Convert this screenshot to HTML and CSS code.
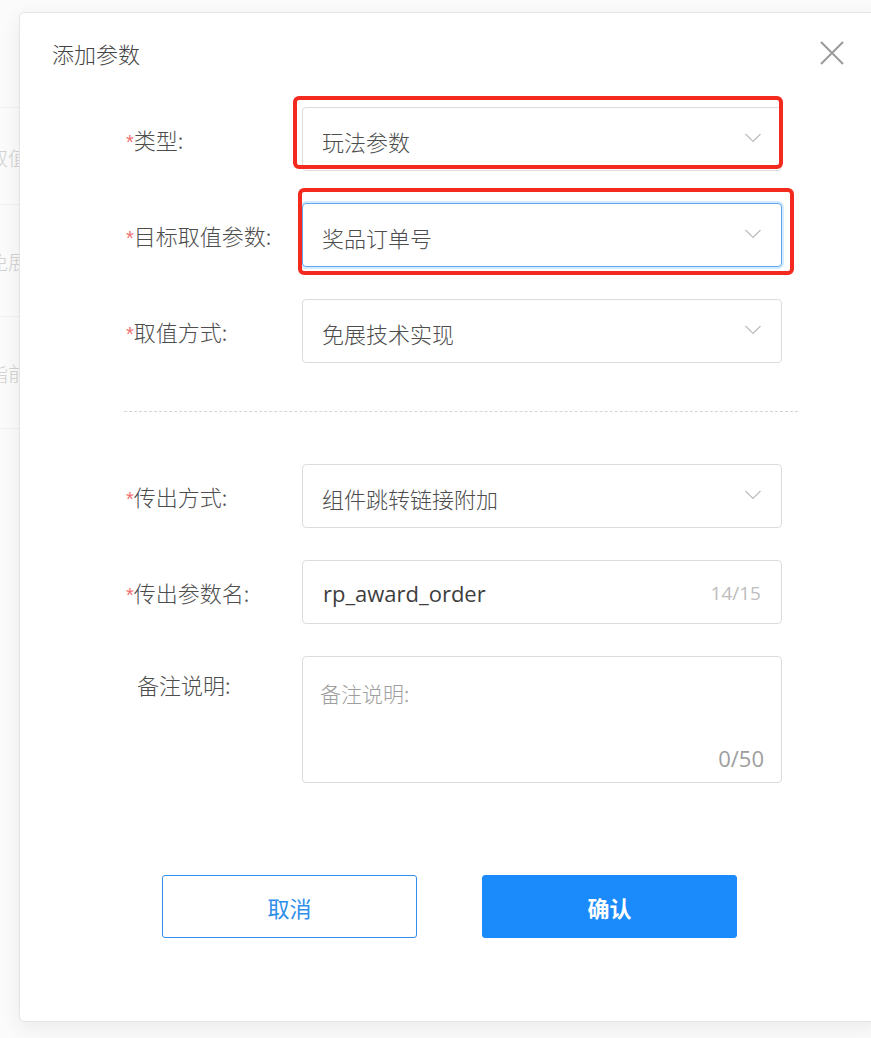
FILE: index.html
```html
<!DOCTYPE html>
<html lang="zh-CN">
<head>
<meta charset="utf-8">
<title>添加参数</title>
<link rel="stylesheet" href="styles.css">
</head>
<body>
<div class="page-bg">
  <div class="bg-list">
    <div class="bg-row">取值方式</div>
    <div class="bg-row">免展技术实现</div>
    <div class="bg-row">指前参数</div>
    <div class="bg-row"></div>
  </div>
</div>

<div class="modal">
  <div class="modal-header">
    <div class="modal-title">添加参数</div>
    <button class="close-btn" aria-label="关闭">
      <svg width="26" height="26" viewBox="0 0 26 26"><path d="M2 2 L24 24 M24 2 L2 24" stroke="#9a9a9a" stroke-width="2" fill="none"/></svg>
    </button>
  </div>

  <div class="form">
    <div class="form-row">
      <label class="form-label"><span class="req">*</span>类型:</label>
      <div class="field">
        <div class="select">
          <span class="select-value">玩法参数</span>
          <svg class="chevron" width="16" height="10" viewBox="0 0 16 10"><path d="M0.5 1 L8 8.5 L15.5 1" stroke="#bdbdbd" stroke-width="1.2" fill="none"/></svg>
        </div>
        <div class="mark mark-1"></div>
      </div>
    </div>

    <div class="form-row">
      <label class="form-label"><span class="req">*</span>目标取值参数:</label>
      <div class="field">
        <div class="select focused">
          <span class="select-value">奖品订单号</span>
          <svg class="chevron" width="16" height="10" viewBox="0 0 16 10"><path d="M0.5 1 L8 8.5 L15.5 1" stroke="#bdbdbd" stroke-width="1.2" fill="none"/></svg>
        </div>
        <div class="mark mark-2"></div>
      </div>
    </div>

    <div class="form-row">
      <label class="form-label"><span class="req">*</span>取值方式:</label>
      <div class="field">
        <div class="select">
          <span class="select-value">免展技术实现</span>
          <svg class="chevron" width="16" height="10" viewBox="0 0 16 10"><path d="M0.5 1 L8 8.5 L15.5 1" stroke="#bdbdbd" stroke-width="1.2" fill="none"/></svg>
        </div>
      </div>
    </div>

    <div class="divider"></div>

    <div class="form-row">
      <label class="form-label"><span class="req">*</span>传出方式:</label>
      <div class="field">
        <div class="select">
          <span class="select-value">组件跳转链接附加</span>
          <svg class="chevron" width="16" height="10" viewBox="0 0 16 10"><path d="M0.5 1 L8 8.5 L15.5 1" stroke="#bdbdbd" stroke-width="1.2" fill="none"/></svg>
        </div>
      </div>
    </div>

    <div class="form-row">
      <label class="form-label"><span class="req">*</span>传出参数名:</label>
      <div class="field">
        <div class="input">
          <span class="input-value">rp_award_order</span>
          <span class="count">14/15</span>
        </div>
      </div>
    </div>

    <div class="form-row top">
      <label class="form-label plain">备注说明:</label>
      <div class="field">
        <div class="textarea">
          <span class="placeholder">备注说明:</span>
          <span class="ta-count">0/50</span>
        </div>
      </div>
    </div>
  </div>

  <div class="modal-footer">
    <button class="btn btn-ghost">取消</button>
    <button class="btn btn-primary">确认</button>
  </div>
</div>
</body>
</html>
```

FILE: styles.css
```css
* { box-sizing: border-box; }

html, body {
  margin: 0;
  padding: 0;
  width: 871px;
  height: 1038px;
  overflow: hidden;
  background: #f6f6f6;
  font-family: "Noto Sans CJK SC", "Open Sans", sans-serif;
  position: relative;
}

.page-bg {
  height: 1038px;
  background: #fbfbfb;
  padding-top: 107px;
}

.bg-list {
  margin-left: -12px;
  width: 300px;
}

.bg-row {
  height: 97px;
  border-top: 1px solid #efefef;
  display: flex;
  align-items: center;
  font-size: 20px;
  font-weight: 300;
  color: #d2d2d2;
  padding-top: 2px;
}
.bg-row:nth-child(2) { height: 112px; }
.bg-row:nth-child(3) { height: 112px; }

.modal {
  position: absolute;
  left: 19px;
  top: 12px;
  width: 861px;
  height: 1010px;
  background: #fff;
  border: 1px solid #e4e4e4;
  border-radius: 5px;
  box-shadow: 0 6px 20px rgba(0, 0, 0, 0.07);
  display: flex;
  flex-direction: column;
}

.modal-header {
  display: flex;
  justify-content: space-between;
  align-items: center;
  padding: 25px 34px 0 32px;
  height: 55px;
}

.modal-title {
  font-size: 22px;
  line-height: 30px;
  color: #444;
  font-weight: 300;
}

.close-btn {
  border: 0;
  background: none;
  padding: 0;
  width: 26px;
  height: 26px;
  display: flex;
  margin-top: 0;
}

.form {
  margin: 39px 0 0 104px;
  width: 674px;
  display: flex;
  flex-direction: column;
  gap: 32px;
}

.form-row {
  display: flex;
  align-items: center;
}
.form-row.top { align-items: flex-start; }

.form-label {
  width: 178px;
  flex: none;
  font-size: 22px;
  font-weight: 300;
  color: #4d4d4d;
  padding-left: 2px;
  padding-top: 3px;
  line-height: 30px;
}
.form-label.plain {
  padding-left: 13px;
  padding-top: 13px;
}

.req {
  color: #f07070;
  font-family: "Liberation Sans", sans-serif;
  font-size: 20px;
  margin-right: 0;
}

.field {
  position: relative;
  width: 480px;
}

.select, .input {
  height: 64px;
  border: 1px solid #dcdcdc;
  border-radius: 4px;
  display: flex;
  align-items: center;
  justify-content: space-between;
  padding: 4px 20px 0 19px;
  background: #fff;
}

.select.focused {
  border-color: #5fa6ef;
  box-shadow: 0 0 0 2px rgba(24, 144, 255, 0.18);
}

.select-value, .input-value {
  font-size: 22px;
  font-weight: 300;
  color: #4d4d4d;
}

.input-value {
  font-family: "Open Sans", "Noto Sans CJK SC", sans-serif;
  font-size: 22px;
  font-weight: 400;
  color: #3e3e3e;
  padding-left: 1px;
  margin-top: -2px;
}

.count {
  font-family: "Open Sans", sans-serif;
  font-size: 19px;
  color: #bdbdbd;
  margin-top: -2px;
}

.chevron { margin-right: 0; margin-top: -6px; }

.mark {
  position: absolute;
  border: 4px solid #f52a1e;
  border-radius: 6px;
  pointer-events: none;
}
.mark-1 { left: -9px; top: -11px; right: -1px; bottom: 2px; }
.mark-2 { left: -4px; top: -15px; right: -12px; bottom: -8px; }

.divider {
  height: 0;
  border-top: 1px dashed #d6d6d6;
  margin: 16px 0 20px;
}

.textarea {
  height: 127px;
  border: 1px solid #dcdcdc;
  border-radius: 4px;
  position: relative;
  display: flex;
  flex-direction: column;
  justify-content: space-between;
  padding: 21px 17px 9px 17px;
}

.placeholder {
  font-size: 21px;
  font-weight: 300;
  color: #9e9e9e;
  line-height: 30px;
}

.ta-count {
  align-self: flex-end;
  font-family: "Open Sans", sans-serif;
  font-size: 22px;
  color: #9e9e9e;
  line-height: 30px;
}

.modal-footer {
  display: flex;
  justify-content: center;
  gap: 65px;
  margin-top: 92px;
}

.btn {
  width: 255px;
  height: 63px;
  border-radius: 3px;
  font-size: 22px;
  font-family: "Noto Sans CJK SC", sans-serif;
  cursor: pointer;
}

.btn-ghost {
  background: #fff;
  border: 1px solid #2f8fea;
  color: #2f8fea;
  font-weight: 400;
}

.btn-primary {
  background: #1b8bfb;
  border: 1px solid #1b8bfb;
  color: #fff;
  font-weight: 700;
}
```
